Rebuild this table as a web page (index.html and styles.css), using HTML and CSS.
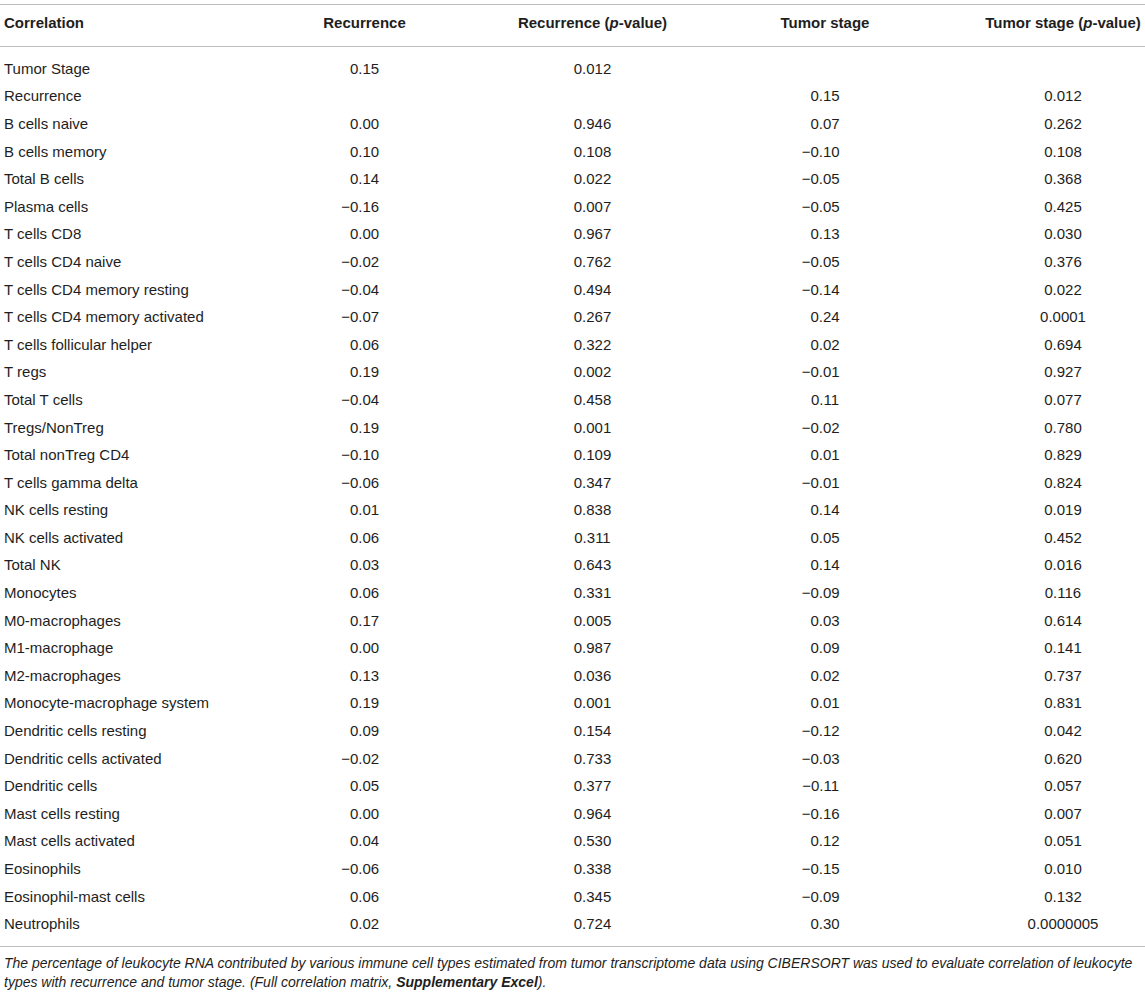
FILE: index.html
```html
<!DOCTYPE html>
<html>
<head>
  <title>Correlation of immune cell types with recurrence and tumor stage</title>
  <link rel="stylesheet" href="styles.css">
</head>
<body>
  <table class="corr">
    <colgroup>
      <col class="c-name">
      <col class="c-rec">
      <col class="c-recp">
      <col class="c-stage">
      <col class="c-stagep">
    </colgroup>
    <thead>
      <tr>
        <th class="name">Correlation</th>
        <th>Recurrence</th>
        <th>Recurrence (<i>p</i>-value)</th>
        <th>Tumor stage</th>
        <th class="last">Tumor stage (<i>p</i>-value)</th>
      </tr>
    </thead>
    <tbody>
      <tr class="first"><td class="name">Tumor Stage</td><td>0.15</td><td>0.012</td><td></td><td class="last"></td></tr>
      <tr><td class="name">Recurrence</td><td></td><td></td><td>0.15</td><td class="last">0.012</td></tr>
      <tr><td class="name">B cells naive</td><td>0.00</td><td>0.946</td><td>0.07</td><td class="last">0.262</td></tr>
      <tr><td class="name">B cells memory</td><td>0.10</td><td>0.108</td><td><span class="sign">−</span>0.10</td><td class="last">0.108</td></tr>
      <tr><td class="name">Total B cells</td><td>0.14</td><td>0.022</td><td><span class="sign">−</span>0.05</td><td class="last">0.368</td></tr>
      <tr><td class="name">Plasma cells</td><td><span class="sign">−</span>0.16</td><td>0.007</td><td><span class="sign">−</span>0.05</td><td class="last">0.425</td></tr>
      <tr><td class="name">T cells CD8</td><td>0.00</td><td>0.967</td><td>0.13</td><td class="last">0.030</td></tr>
      <tr><td class="name">T cells CD4 naive</td><td><span class="sign">−</span>0.02</td><td>0.762</td><td><span class="sign">−</span>0.05</td><td class="last">0.376</td></tr>
      <tr><td class="name">T cells CD4 memory resting</td><td><span class="sign">−</span>0.04</td><td>0.494</td><td><span class="sign">−</span>0.14</td><td class="last">0.022</td></tr>
      <tr><td class="name">T cells CD4 memory activated</td><td><span class="sign">−</span>0.07</td><td>0.267</td><td>0.24</td><td class="last">0.0001</td></tr>
      <tr><td class="name">T cells follicular helper</td><td>0.06</td><td>0.322</td><td>0.02</td><td class="last">0.694</td></tr>
      <tr><td class="name">T regs</td><td>0.19</td><td>0.002</td><td><span class="sign">−</span>0.01</td><td class="last">0.927</td></tr>
      <tr><td class="name">Total T cells</td><td><span class="sign">−</span>0.04</td><td>0.458</td><td>0.11</td><td class="last">0.077</td></tr>
      <tr><td class="name">Tregs/NonTreg</td><td>0.19</td><td>0.001</td><td><span class="sign">−</span>0.02</td><td class="last">0.780</td></tr>
      <tr><td class="name">Total nonTreg CD4</td><td><span class="sign">−</span>0.10</td><td>0.109</td><td>0.01</td><td class="last">0.829</td></tr>
      <tr><td class="name">T cells gamma delta</td><td><span class="sign">−</span>0.06</td><td>0.347</td><td><span class="sign">−</span>0.01</td><td class="last">0.824</td></tr>
      <tr><td class="name">NK cells resting</td><td>0.01</td><td>0.838</td><td>0.14</td><td class="last">0.019</td></tr>
      <tr><td class="name">NK cells activated</td><td>0.06</td><td>0.311</td><td>0.05</td><td class="last">0.452</td></tr>
      <tr><td class="name">Total NK</td><td>0.03</td><td>0.643</td><td>0.14</td><td class="last">0.016</td></tr>
      <tr><td class="name">Monocytes</td><td>0.06</td><td>0.331</td><td><span class="sign">−</span>0.09</td><td class="last">0.116</td></tr>
      <tr><td class="name">M0-macrophages</td><td>0.17</td><td>0.005</td><td>0.03</td><td class="last">0.614</td></tr>
      <tr><td class="name">M1-macrophage</td><td>0.00</td><td>0.987</td><td>0.09</td><td class="last">0.141</td></tr>
      <tr><td class="name">M2-macrophages</td><td>0.13</td><td>0.036</td><td>0.02</td><td class="last">0.737</td></tr>
      <tr><td class="name">Monocyte-macrophage system</td><td>0.19</td><td>0.001</td><td>0.01</td><td class="last">0.831</td></tr>
      <tr><td class="name">Dendritic cells resting</td><td>0.09</td><td>0.154</td><td><span class="sign">−</span>0.12</td><td class="last">0.042</td></tr>
      <tr><td class="name">Dendritic cells activated</td><td><span class="sign">−</span>0.02</td><td>0.733</td><td><span class="sign">−</span>0.03</td><td class="last">0.620</td></tr>
      <tr><td class="name">Dendritic cells</td><td>0.05</td><td>0.377</td><td><span class="sign">−</span>0.11</td><td class="last">0.057</td></tr>
      <tr><td class="name">Mast cells resting</td><td>0.00</td><td>0.964</td><td><span class="sign">−</span>0.16</td><td class="last">0.007</td></tr>
      <tr><td class="name">Mast cells activated</td><td>0.04</td><td>0.530</td><td>0.12</td><td class="last">0.051</td></tr>
      <tr><td class="name">Eosinophils</td><td><span class="sign">−</span>0.06</td><td>0.338</td><td><span class="sign">−</span>0.15</td><td class="last">0.010</td></tr>
      <tr><td class="name">Eosinophil-mast cells</td><td>0.06</td><td>0.345</td><td><span class="sign">−</span>0.09</td><td class="last">0.132</td></tr>
      <tr class="end"><td class="name">Neutrophils</td><td>0.02</td><td>0.724</td><td>0.30</td><td class="last">0.0000005</td></tr>
    </tbody>
  </table>

  <p class="caption">The percentage of leukocyte RNA contributed by various immune cell types estimated from tumor transcriptome data using CIBERSORT was used to evaluate correlation of leukocyte types with recurrence and tumor stage. (Full correlation matrix, <b>Supplementary Excel</b>).</p>
</body>
</html>
```

FILE: styles.css
```css
body {
  font-family: "Liberation Sans", Arial, sans-serif;
  color: #1e1e1e;
  background: #fff;
  margin: 0;
  padding: 0;
}

.corr {
  width: 1145px;
  table-layout: fixed;
  border-collapse: collapse;
  margin-top: 4px;
  font-size: 15px;
  line-height: 18px;
}

.c-name { width: 320px; }
.c-rec { width: 89px; }
.c-recp { width: 367px; }
.c-stage { width: 98px; }
.c-stagep { width: 271px; }

.corr thead tr {
  border-top: 1px solid #bdbdbd;
  border-bottom: 1px solid #bdbdbd;
}

.corr th {
  font-weight: bold;
  text-align: center;
  padding: 9px 0 14px;
  white-space: nowrap;
}

.corr td {
  text-align: center;
  padding: 4.8px 0;
  height: 18px;
  white-space: nowrap;
}

.corr .name {
  text-align: left;
  padding-left: 4px;
}

.corr .last {
  padding-left: 107px;
}

.corr tbody tr.first td {
  padding-top: 12.8px;
}

.corr tbody tr.end td {
  padding-bottom: 12.8px;
}

.corr tbody tr.end {
  border-bottom: 1px solid #bdbdbd;
}

/* minus sign hangs left so the digits stay centred */
.sign {
  display: inline-flex;
  width: 0;
  justify-content: flex-end;
}

.caption {
  margin: 7px 0 0;
  padding-left: 4px;
  font-size: 14px;
  line-height: 19px;
  font-style: italic;
  width: 1140px;
}
```
